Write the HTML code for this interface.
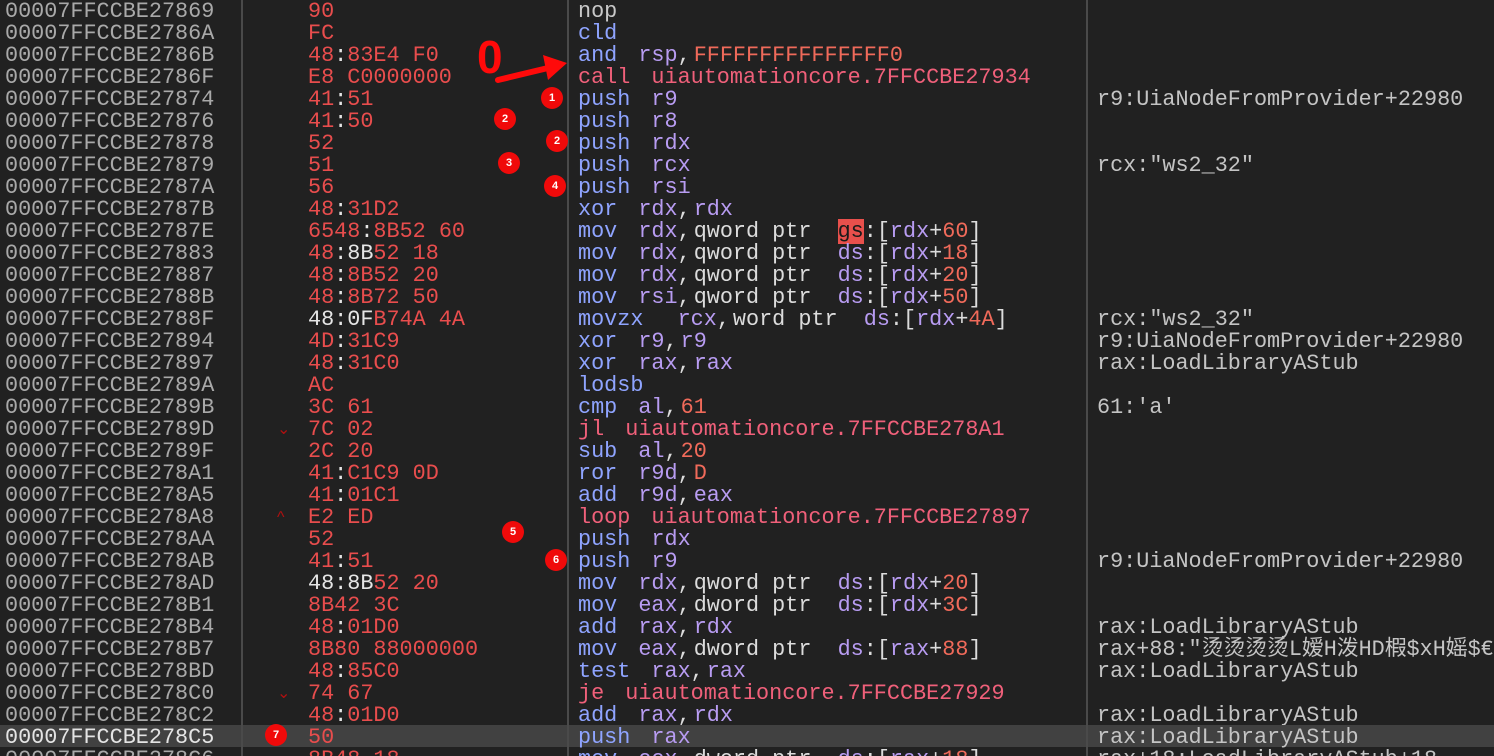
<!DOCTYPE html>
<html><head><meta charset="utf-8"><style>
html,body{margin:0;padding:0;background:#212121;width:1494px;height:756px;overflow:hidden;position:relative}
.row{position:absolute;left:0;width:1494px;height:22px;font:21.8px/22px "Liberation Mono","Noto Sans CJK SC",monospace;white-space:pre}
.c{position:absolute;top:2px}
.a{left:5px;color:#a9a9a9}
.bt{left:308px;color:#e84d4d}
.d{left:578px;color:#dcdcdc}
.d i{font-style:normal;margin-right:3px}
.d b{font-weight:normal;margin-right:8px}
.cm{left:1097px;color:#c4c4c4}
.w{color:#e6e6e6}.m{color:#8fa4ff}.r{color:#b89cf2}.n{color:#f06a5a}.j{color:#f0607a}.g{color:#1a1a1a;background:#e8504c}
.hl{background:#414141}
.hl .a{color:#e4e4e4}
.vl{position:absolute;top:0;height:756px;width:2px;background:#4a4a4a}
.ar{position:absolute;top:2px;left:277px;color:#b01010;font:16px/22px "Liberation Sans",sans-serif}
.cir{position:absolute;width:22px;height:22px;border-radius:50%;background:#f00a0a;color:#fff;font:bold 11px/22px "Liberation Sans",sans-serif;text-align:center}
</style></head><body>
<div class="row" style="top:-1px"><span class="c a">00007FFCCBE27869</span><span class="c bt">90</span><span class="c d"><span style="color:#c8c8c8">nop</span></span></div>
<div class="row" style="top:21px"><span class="c a">00007FFCCBE2786A</span><span class="c bt">FC</span><span class="c d"><span class="m">cld</span></span></div>
<div class="row" style="top:43px"><span class="c a">00007FFCCBE2786B</span><span class="c bt">48<span class="w">:</span>83E4 F0</span><span class="c d"><b class="m">and</b> <span class="r">rsp</span><i>,</i><span class="n">FFFFFFFFFFFFFFF0</span></span></div>
<div class="row" style="top:65px"><span class="c a">00007FFCCBE2786F</span><span class="c bt">E8 C0000000</span><span class="c d j"><b>call</b> uiautomationcore.7FFCCBE27934</span></div>
<div class="row" style="top:87px"><span class="c a">00007FFCCBE27874</span><span class="c bt">41<span class="w">:</span>51</span><span class="c d"><b class="m">push</b> <span class="r">r9</span></span><span class="c cm">r9:UiaNodeFromProvider+22980</span></div>
<div class="row" style="top:109px"><span class="c a">00007FFCCBE27876</span><span class="c bt">41<span class="w">:</span>50</span><span class="c d"><b class="m">push</b> <span class="r">r8</span></span></div>
<div class="row" style="top:131px"><span class="c a">00007FFCCBE27878</span><span class="c bt">52</span><span class="c d"><b class="m">push</b> <span class="r">rdx</span></span></div>
<div class="row" style="top:153px"><span class="c a">00007FFCCBE27879</span><span class="c bt">51</span><span class="c d"><b class="m">push</b> <span class="r">rcx</span></span><span class="c cm">rcx:"ws2_32"</span></div>
<div class="row" style="top:175px"><span class="c a">00007FFCCBE2787A</span><span class="c bt">56</span><span class="c d"><b class="m">push</b> <span class="r">rsi</span></span></div>
<div class="row" style="top:197px"><span class="c a">00007FFCCBE2787B</span><span class="c bt">48<span class="w">:</span>31D2</span><span class="c d"><b class="m">xor</b> <span class="r">rdx</span><i>,</i><span class="r">rdx</span></span></div>
<div class="row" style="top:219px"><span class="c a">00007FFCCBE2787E</span><span class="c bt">6548<span class="w">:</span>8B52 60</span><span class="c d"><b class="m">mov</b> <span class="r">rdx</span><i>,</i>qword ptr  <span class="g">gs</span>:[<span class="r">rdx</span>+<span class="n">60</span>]</span></div>
<div class="row" style="top:241px"><span class="c a">00007FFCCBE27883</span><span class="c bt">48<span class="w">:8B</span>52 18</span><span class="c d"><b class="m">mov</b> <span class="r">rdx</span><i>,</i>qword ptr  <span class="r">ds</span>:[<span class="r">rdx</span>+<span class="n">18</span>]</span></div>
<div class="row" style="top:263px"><span class="c a">00007FFCCBE27887</span><span class="c bt">48<span class="w">:</span>8B52 20</span><span class="c d"><b class="m">mov</b> <span class="r">rdx</span><i>,</i>qword ptr  <span class="r">ds</span>:[<span class="r">rdx</span>+<span class="n">20</span>]</span></div>
<div class="row" style="top:285px"><span class="c a">00007FFCCBE2788B</span><span class="c bt">48<span class="w">:</span>8B72 50</span><span class="c d"><b class="m">mov</b> <span class="r">rsi</span><i>,</i>qword ptr  <span class="r">ds</span>:[<span class="r">rdx</span>+<span class="n">50</span>]</span></div>
<div class="row" style="top:307px"><span class="c a">00007FFCCBE2788F</span><span class="c bt"><span class="w">48:0F</span>B74A 4A</span><span class="c d"><b class="m">movzx</b>  <span class="r">rcx</span><i>,</i>word ptr  <span class="r">ds</span>:[<span class="r">rdx</span>+<span class="n">4A</span>]</span><span class="c cm">rcx:"ws2_32"</span></div>
<div class="row" style="top:329px"><span class="c a">00007FFCCBE27894</span><span class="c bt">4D<span class="w">:</span>31C9</span><span class="c d"><b class="m">xor</b> <span class="r">r9</span><i>,</i><span class="r">r9</span></span><span class="c cm">r9:UiaNodeFromProvider+22980</span></div>
<div class="row" style="top:351px"><span class="c a">00007FFCCBE27897</span><span class="c bt">48<span class="w">:</span>31C0</span><span class="c d"><b class="m">xor</b> <span class="r">rax</span><i>,</i><span class="r">rax</span></span><span class="c cm">rax:LoadLibraryAStub</span></div>
<div class="row" style="top:373px"><span class="c a">00007FFCCBE2789A</span><span class="c bt">AC</span><span class="c d"><span class="m">lodsb</span></span></div>
<div class="row" style="top:395px"><span class="c a">00007FFCCBE2789B</span><span class="c bt">3C 61</span><span class="c d"><b class="m">cmp</b> <span class="r">al</span><i>,</i><span class="n">61</span></span><span class="c cm">61:'a'</span></div>
<div class="row" style="top:417px"><span class="c a">00007FFCCBE2789D</span><span class="ar">⌄</span><span class="c bt">7C 02</span><span class="c d j"><b>jl</b> uiautomationcore.7FFCCBE278A1</span></div>
<div class="row" style="top:439px"><span class="c a">00007FFCCBE2789F</span><span class="c bt">2C 20</span><span class="c d"><b class="m">sub</b> <span class="r">al</span><i>,</i><span class="n">20</span></span></div>
<div class="row" style="top:461px"><span class="c a">00007FFCCBE278A1</span><span class="c bt">41<span class="w">:</span>C1C9 0D</span><span class="c d"><b class="m">ror</b> <span class="r">r9d</span><i>,</i><span class="n">D</span></span></div>
<div class="row" style="top:483px"><span class="c a">00007FFCCBE278A5</span><span class="c bt">41<span class="w">:</span>01C1</span><span class="c d"><b class="m">add</b> <span class="r">r9d</span><i>,</i><span class="r">eax</span></span></div>
<div class="row" style="top:505px"><span class="c a">00007FFCCBE278A8</span><span class="ar">^</span><span class="c bt">E2 ED</span><span class="c d j"><b>loop</b> uiautomationcore.7FFCCBE27897</span></div>
<div class="row" style="top:527px"><span class="c a">00007FFCCBE278AA</span><span class="c bt">52</span><span class="c d"><b class="m">push</b> <span class="r">rdx</span></span></div>
<div class="row" style="top:549px"><span class="c a">00007FFCCBE278AB</span><span class="c bt">41<span class="w">:</span>51</span><span class="c d"><b class="m">push</b> <span class="r">r9</span></span><span class="c cm">r9:UiaNodeFromProvider+22980</span></div>
<div class="row" style="top:571px"><span class="c a">00007FFCCBE278AD</span><span class="c bt"><span class="w">48:8B</span>52 20</span><span class="c d"><b class="m">mov</b> <span class="r">rdx</span><i>,</i>qword ptr  <span class="r">ds</span>:[<span class="r">rdx</span>+<span class="n">20</span>]</span></div>
<div class="row" style="top:593px"><span class="c a">00007FFCCBE278B1</span><span class="c bt">8B42 3C</span><span class="c d"><b class="m">mov</b> <span class="r">eax</span><i>,</i>dword ptr  <span class="r">ds</span>:[<span class="r">rdx</span>+<span class="n">3C</span>]</span></div>
<div class="row" style="top:615px"><span class="c a">00007FFCCBE278B4</span><span class="c bt">48<span class="w">:</span>01D0</span><span class="c d"><b class="m">add</b> <span class="r">rax</span><i>,</i><span class="r">rdx</span></span><span class="c cm">rax:LoadLibraryAStub</span></div>
<div class="row" style="top:637px"><span class="c a">00007FFCCBE278B7</span><span class="c bt">8B80 88000000</span><span class="c d"><b class="m">mov</b> <span class="r">eax</span><i>,</i>dword ptr  <span class="r">ds</span>:[<span class="r">rax</span>+<span class="n">88</span>]</span><span class="c cm">rax+88:"烫烫烫烫L嫒H泼HD椵$xH媱$€</span></div>
<div class="row" style="top:659px"><span class="c a">00007FFCCBE278BD</span><span class="c bt">48<span class="w">:</span>85C0</span><span class="c d"><b class="m">test</b> <span class="r">rax</span><i>,</i><span class="r">rax</span></span><span class="c cm">rax:LoadLibraryAStub</span></div>
<div class="row" style="top:681px"><span class="c a">00007FFCCBE278C0</span><span class="ar">⌄</span><span class="c bt">74 67</span><span class="c d j"><b>je</b> uiautomationcore.7FFCCBE27929</span></div>
<div class="row" style="top:703px"><span class="c a">00007FFCCBE278C2</span><span class="c bt">48<span class="w">:</span>01D0</span><span class="c d"><b class="m">add</b> <span class="r">rax</span><i>,</i><span class="r">rdx</span></span><span class="c cm">rax:LoadLibraryAStub</span></div>
<div class="row hl" style="top:725px"><span class="c a">00007FFCCBE278C5</span><span class="c bt">50</span><span class="c d"><b class="m">push</b> <span class="r">rax</span></span><span class="c cm">rax:LoadLibraryAStub</span></div>
<div class="row" style="top:747px"><span class="c a">00007FFCCBE278C6</span><span class="c bt">8B48 18</span><span class="c d"><b class="m">mov</b> <span class="r">ecx</span><i>,</i>dword ptr  <span class="r">ds</span>:[<span class="r">rax</span>+<span class="n">18</span>]</span><span class="c cm">rax+18:LoadLibraryAStub+18</span></div>
<div class="vl" style="left:241px"></div>
<div class="vl" style="left:567px"></div>
<div class="vl" style="left:1086px"></div>
<div style="position:absolute;left:477px;top:32px;color:#ff0a0a;font:bold 46px/50px 'Liberation Sans',sans-serif">0</div>
<svg style="position:absolute;left:0;top:0" width="1494" height="756"><line x1="498" y1="80" x2="548" y2="68" stroke="#ff0a0a" stroke-width="6" stroke-linecap="round"/><polygon points="567,63 543,55 548,80" fill="#ff0a0a"/></svg>
<div class="cir" style="left:541px;top:87px">1</div>
<div class="cir" style="left:494px;top:108px">2</div>
<div class="cir" style="left:546px;top:130px">2</div>
<div class="cir" style="left:498px;top:152px">3</div>
<div class="cir" style="left:544px;top:175px">4</div>
<div class="cir" style="left:502px;top:521px">5</div>
<div class="cir" style="left:545px;top:549px">6</div>
<div class="cir" style="left:265px;top:724px">7</div>
</body></html>
